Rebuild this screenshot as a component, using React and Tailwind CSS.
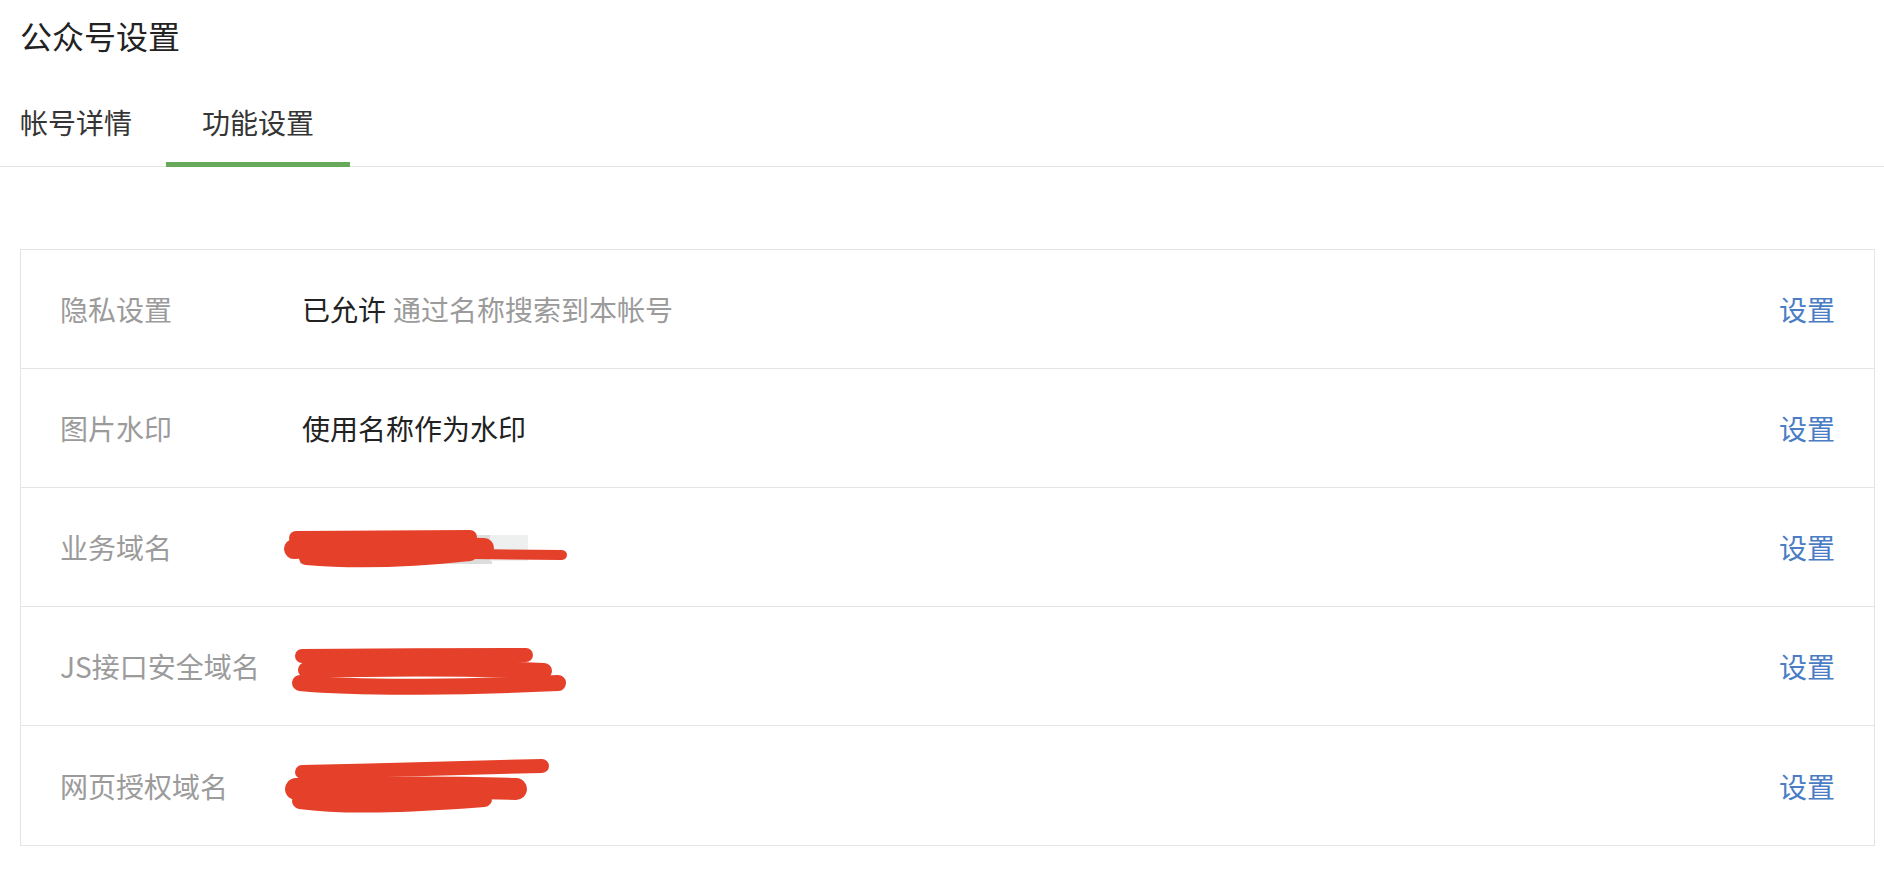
import React from 'react'

// red marker scribbles that hide the domain values
const ScribbleBusiness = () => (
  <svg width="290" height="60" viewBox="0 0 290 60" className="block -ml-[18px]">
    <rect x="16" y="18" width="192" height="29" fill="#dcdddd" />
    <rect x="206" y="18" width="38" height="26" fill="#eef0f0" />
    <g stroke="#e5412a" strokeLinecap="round" fill="none">
      <path d="M12 21 L186 20" strokeWidth="14" />
      <path d="M10 32 C60 29 140 30 200 31" strokeWidth="20" />
      <path d="M22 41 C80 46 140 42 186 37" strokeWidth="14" />
      <path d="M188 37 L278 38" strokeWidth="10" />
    </g>
  </svg>
)

const ScribbleJs = () => (
  <svg width="290" height="60" viewBox="0 0 290 60" className="block -ml-[18px]">
    <g stroke="#e5412a" strokeLinecap="round" fill="none">
      <path d="M18 20 C90 19 170 19 242 19" strokeWidth="14" />
      <path d="M22 34 C100 32 190 32 260 35" strokeWidth="16" />
      <path d="M16 47 C80 53 190 51 274 47" strokeWidth="16" />
    </g>
  </svg>
)

const ScribbleOauth = () => (
  <svg width="290" height="60" viewBox="0 0 290 60" className="block -ml-[18px]">
    <g stroke="#e5412a" strokeLinecap="round" fill="none">
      <path d="M18 16 C100 14 190 12 258 10" strokeWidth="14" />
      <path d="M12 33 C90 31 170 31 232 33" strokeWidth="22" />
      <path d="M16 45 C60 51 120 49 200 43" strokeWidth="16" />
    </g>
  </svg>
)

const rows = [
  {
    label: '隐私设置',
    value: (
      <span>
        <span className="text-[#222]">已允许</span>
        <span className="ml-[7px] text-[#9b9b9b]">通过名称搜索到本帐号</span>
      </span>
    ),
  },
  { label: '图片水印', value: <span className="text-[#222]">使用名称作为水印</span> },
  { label: '业务域名', value: <ScribbleBusiness /> },
  { label: 'JS接口安全域名', value: <ScribbleJs /> },
  { label: '网页授权域名', value: <ScribbleOauth /> },
]

export default function App() {
  return (
    <div className="min-h-screen bg-white font-['Noto_Sans_CJK_SC','Noto_Sans',sans-serif]">
      <div className="pl-[20px] pt-[19px] text-[32px] leading-[32px] text-[#222]">公众号设置</div>

      <div className="mt-[57px] flex gap-[34px] border-b border-[#e4e4e4] pl-[20px]">
        <div className="-mb-px border-b-[5px] border-transparent pb-[26px] text-[28px] leading-[28px] text-[#353535]">
          帐号详情
        </div>
        <div className="-mb-px border-b-[5px] border-[#66a95b] px-[36px] pb-[26px] text-[28px] leading-[28px] text-[#353535]">
          功能设置
        </div>
      </div>

      <div className="ml-[20px] mr-[9px] mt-[82px] border border-[#e4e4e4] divide-y divide-[#e4e4e4]">
        {rows.map((r) => (
          <div key={r.label} className="flex h-[119px] items-center pl-[39px] pr-[39px] text-[28px] leading-[28px]">
            <div className="w-[242px] shrink-0 text-[#9b9b9b]">{r.label}</div>
            <div className="flex-1">{r.value}</div>
            <a className="text-[#4a7dc4]">设置</a>
          </div>
        ))}
      </div>
    </div>
  )
}
